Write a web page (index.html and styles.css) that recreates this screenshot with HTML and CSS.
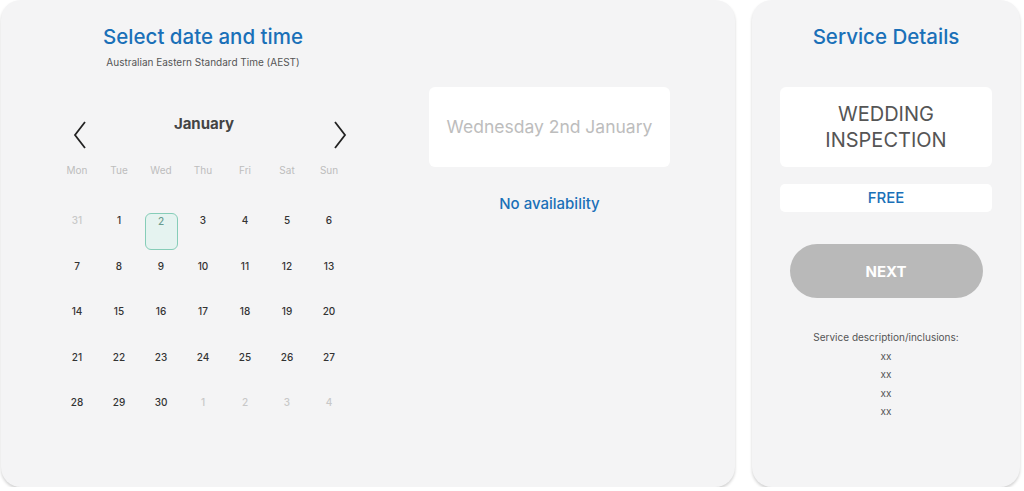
FILE: index.html
```html
<!DOCTYPE html>
<html lang="en">
<head>
    <meta charset="UTF-8">
    <meta name="viewport" content="width=device-width, initial-scale=1.0">
    <title>Book a service</title>
    <link rel="stylesheet" href="styles.css">
</head>
<body>
    <div class="page">
        <!-- Tarjeta de fecha y hora -->
        <section class="card booking">
            <div class="calendar-col">
                <h1 class="title">Select date and time</h1>
                <p class="timezone">Australian Eastern Standard Time (AEST)</p>

                <div class="cal-header">
                    <svg class="arrow" width="14" height="30" viewBox="0 0 14 30"><path d="M12 2 L2 15 L12 28" fill="none" stroke="#222" stroke-width="1.8"/></svg>
                    <span class="month">January</span>
                    <svg class="arrow" width="14" height="30" viewBox="0 0 14 30"><path d="M2 2 L12 15 L2 28" fill="none" stroke="#222" stroke-width="1.8"/></svg>
                </div>

                <div class="weekdays">
                    <span>Mon</span><span>Tue</span><span>Wed</span><span>Thu</span><span>Fri</span><span>Sat</span><span>Sun</span>
                </div>

                <div class="days">
                    <span class="day muted">31</span>
                    <span class="day">1</span>
                    <span class="day selected">2</span>
                    <span class="day">3</span>
                    <span class="day">4</span>
                    <span class="day">5</span>
                    <span class="day">6</span>
                    <span class="day">7</span>
                    <span class="day">8</span>
                    <span class="day">9</span>
                    <span class="day">10</span>
                    <span class="day">11</span>
                    <span class="day">12</span>
                    <span class="day">13</span>
                    <span class="day">14</span>
                    <span class="day">15</span>
                    <span class="day">16</span>
                    <span class="day">17</span>
                    <span class="day">18</span>
                    <span class="day">19</span>
                    <span class="day">20</span>
                    <span class="day">21</span>
                    <span class="day">22</span>
                    <span class="day">23</span>
                    <span class="day">24</span>
                    <span class="day">25</span>
                    <span class="day">26</span>
                    <span class="day">27</span>
                    <span class="day">28</span>
                    <span class="day">29</span>
                    <span class="day">30</span>
                    <span class="day muted">1</span>
                    <span class="day muted">2</span>
                    <span class="day muted">3</span>
                    <span class="day muted">4</span>
                </div>
            </div>

            <div class="slots-col">
                <div class="date-box">Wednesday 2nd January</div>
                <p class="no-slots">No availability</p>
            </div>
        </section>

        <!-- Tarjeta de detalles del servicio -->
        <aside class="card service">
            <h2 class="title">Service Details</h2>
            <div class="service-name">WEDDING<br>INSPECTION</div>
            <div class="price">FREE</div>
            <button class="next-btn" disabled>NEXT</button>
            <div class="description">
                <p>Service description/inclusions:</p>
                <p>xx</p>
                <p>xx</p>
                <p>xx</p>
                <p>xx</p>
            </div>
        </aside>
    </div>
</body>
</html>
```

FILE: styles.css
```css
/* Estilos generales */
body {
    margin: 0;
    background-color: #fff;
    font-family: "Inter", "Noto Sans", sans-serif;
    color: #333;
}

.page {
    display: flex;
    gap: 17px;
    padding: 0 4px 0 1px;
}

/* Tarjetas */
.card {
    background-color: #f4f4f5;
    border-radius: 20px;
    box-shadow: 0 2px 3px rgba(0, 0, 0, 0.18);
    height: 487px;
    box-sizing: border-box;
}

.booking {
    width: 734px;
    display: flex;
}

.service {
    width: 268px;
    padding-top: 25px;
    display: flex;
    flex-direction: column;
    align-items: center;
}

.title {
    margin: 0;
    font-size: 20.5px;
    line-height: 24px;
    font-weight: 500;
    color: #1a70b8;
    text-align: center;
}

/* Columna del calendario */
.calendar-col {
    width: 404px;
    padding-top: 25px;
    text-align: center;
}

.timezone {
    margin: 6px 0 0;
    font-size: 10px;
    line-height: 14px;
    color: #555;
}

.cal-header {
    display: flex;
    align-items: flex-start;
    width: 274px;
    margin: 45px 0 0 72px;
}

.arrow {
    margin-top: 6px;
    flex-shrink: 0;
}

.month {
    flex: 1;
    padding-right: 12px;
    font-size: 15px;
    line-height: 20px;
    font-weight: 700;
    color: #444;
}

.weekdays,
.days {
    display: grid;
    grid-template-columns: repeat(7, 42px);
    margin-left: 55px;
}

.weekdays {
    margin-top: 14px;
    font-size: 10px;
    line-height: 12px;
    color: #bdbdbd;
}

.days {
    margin-top: 37px;
    grid-auto-rows: 37px;
    row-gap: 8.5px;
    justify-items: center;
}

.day {
    width: 33px;
    box-sizing: border-box;
    padding-top: 1px;
    font-size: 10px;
    line-height: 12px;
    font-weight: 500;
    color: #333;
}

.day.muted {
    color: #c8c8c8;
}

.day.selected {
    border: 1px solid #86cdb8;
    border-radius: 6px;
    background-color: #e5f3f0;
    color: #6a9c8e;
}

/* Columna de horarios */
.slots-col {
    padding: 87px 0 0 24px;
    text-align: center;
}

.date-box {
    width: 241px;
    height: 80px;
    background-color: #fff;
    border-radius: 6px;
    font-size: 17.5px;
    line-height: 80px;
    color: #bdbdbd;
}

.no-slots {
    margin: 27px 0 0;
    font-size: 15px;
    line-height: 20px;
    font-weight: 500;
    color: #1a70b8;
}

/* Detalles del servicio */
.service-name {
    margin-top: 38px;
    width: 212px;
    height: 80px;
    padding-top: 14px;
    box-sizing: border-box;
    background-color: #fff;
    border-radius: 6px;
    text-align: center;
    font-size: 20px;
    line-height: 26px;
    color: #555;
}

.price {
    margin-top: 17px;
    width: 212px;
    height: 28px;
    background-color: #fff;
    border-radius: 5px;
    text-align: center;
    font-size: 15px;
    line-height: 28px;
    font-weight: 500;
    color: #1a70b8;
}

.next-btn {
    margin-top: 32px;
    width: 193px;
    height: 54px;
    border: none;
    border-radius: 27px;
    background-color: #b9b9b9;
    color: #fff;
    font-family: inherit;
    font-size: 15px;
    font-weight: 700;
}

.description {
    margin-top: 30px;
    text-align: center;
    font-size: 10px;
    line-height: 18.5px;
    color: #555;
}

.description p {
    margin: 0;
}
```
